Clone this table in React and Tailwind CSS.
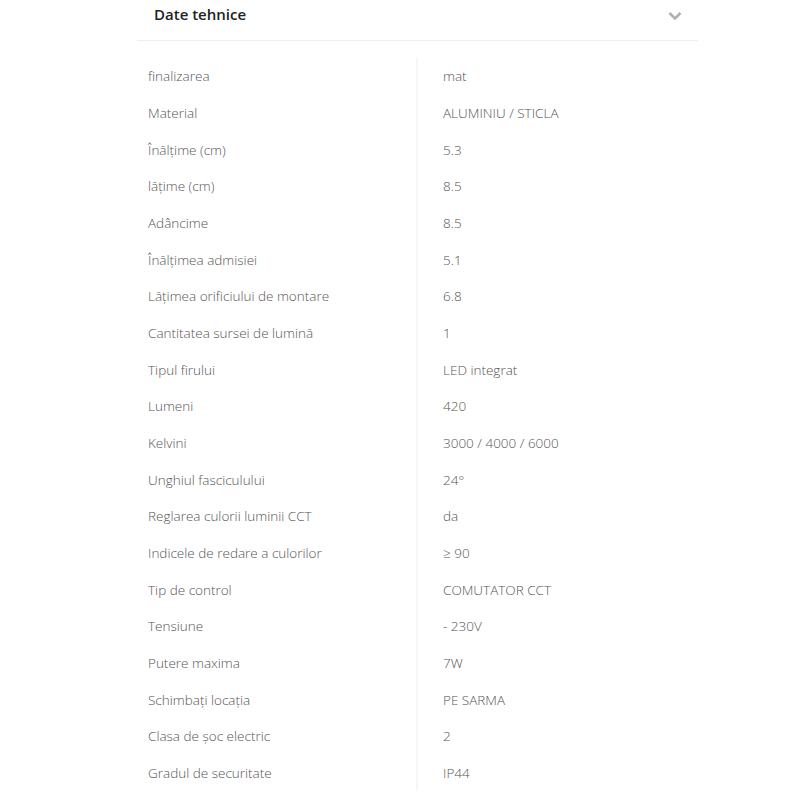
import React from "react";

const rows = [
  ["finalizarea", "mat"],
  ["Material", "ALUMINIU / STICLA"],
  ["Înălțime (cm)", "5.3"],
  ["lățime (cm)", "8.5"],
  ["Adâncime", "8.5"],
  ["Înălțimea admisiei", "5.1"],
  ["Lățimea orificiului de montare", "6.8"],
  ["Cantitatea sursei de lumină", "1"],
  ["Tipul firului", "LED integrat"],
  ["Lumeni", "420"],
  ["Kelvini", "3000 / 4000 / 6000"],
  ["Unghiul fasciculului", "24°"],
  ["Reglarea culorii luminii CCT", "da"],
  ["Indicele de redare a culorilor", "≥ 90"],
  ["Tip de control", "COMUTATOR CCT"],
  ["Tensiune", "- 230V"],
  ["Putere maxima", "7W"],
  ["Schimbați locația", "PE SARMA"],
  ["Clasa de șoc electric", "2"],
  ["Gradul de securitate", "IP44"],
];

export default function App() {
  return (
    <div className="w-[800px] h-[800px] bg-white overflow-hidden" style={{ fontFamily: '"Open Sans", sans-serif' }}>
      <div className="ml-[137px] w-[561px]">
        <div className="h-[41px] border-b border-[#eeeeee] flex items-start justify-between pl-[17px] pr-[15px]">
          <span className="text-[15px] leading-[28px] font-semibold text-[#222]">Date tehnice</span>
          <svg width="16" height="12" viewBox="0 0 16 12" className="mt-[10px]">
            <path d="M2.5 3 L8 8.5 L13.5 3" fill="none" stroke="#b0b0b0" strokeWidth="2.6" />
          </svg>
        </div>
        <div className="mt-[17px] grid grid-cols-[281px_1fr]">
          {rows.map(([k, v], i) => (
            <React.Fragment key={i}>
              <div className="h-[36.68px] flex items-center pl-[11px] text-[13.5px] font-light text-[#555] border-r-2 border-[#f6f6f6]">{k}</div>
              <div className="h-[36.68px] flex items-center pl-[25px] text-[13.5px] font-light text-[#555]">{v}</div>
            </React.Fragment>
          ))}
        </div>
      </div>
    </div>
  );
}
